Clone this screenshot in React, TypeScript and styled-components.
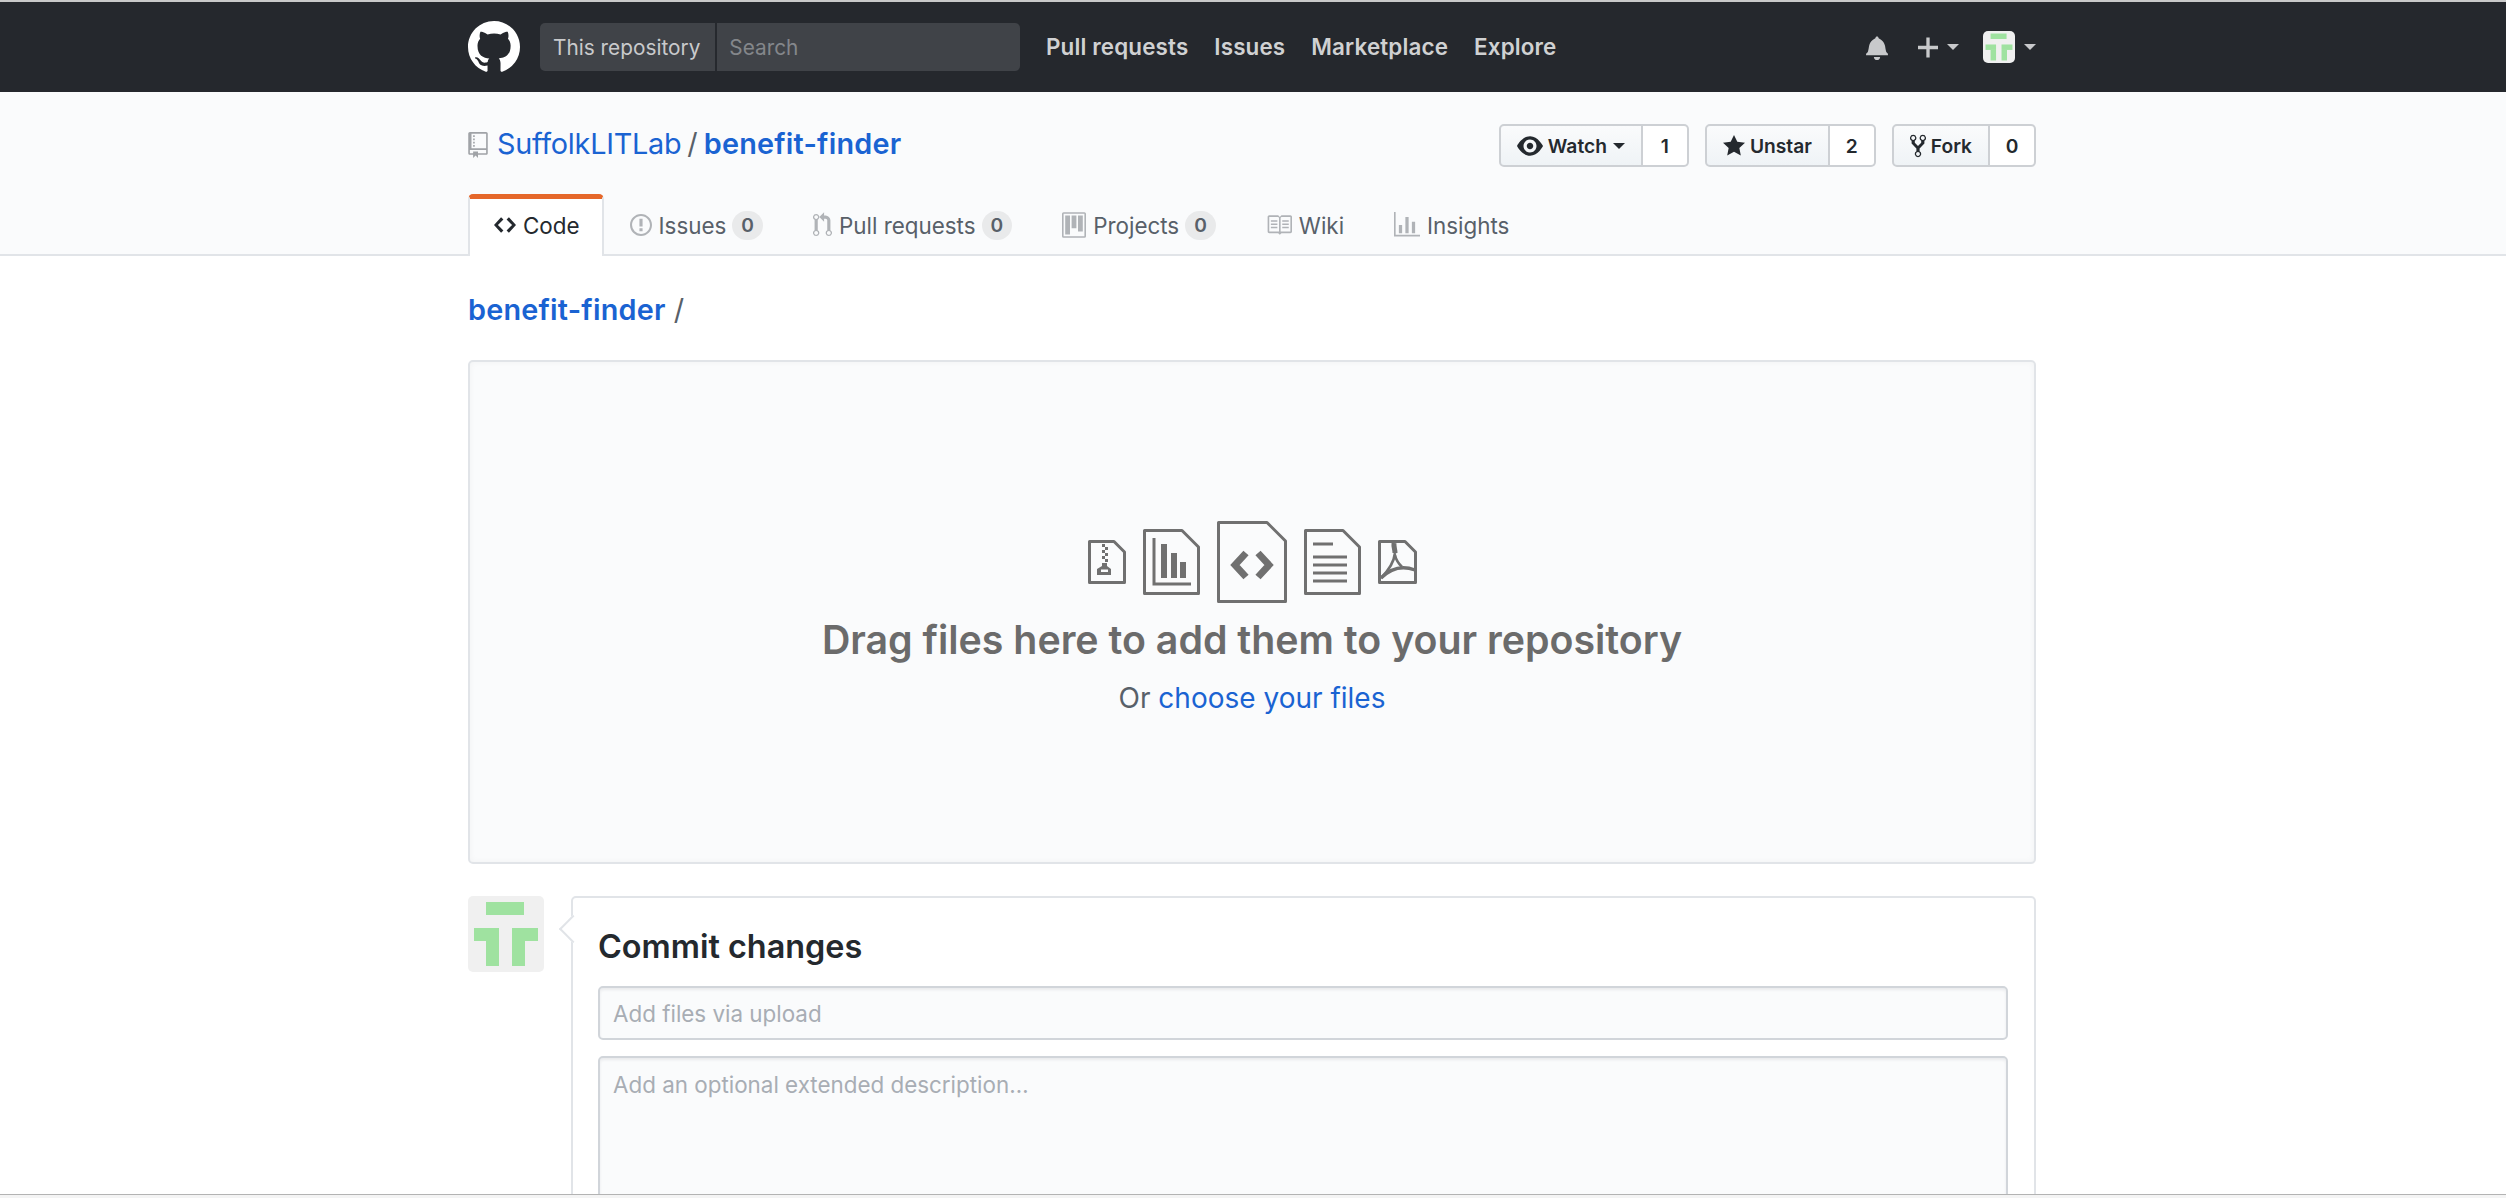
import React from "react"
import styled, { createGlobalStyle } from "styled-components"

const Global = createGlobalStyle`
  html, body { margin: 0; padding: 0; background: #fff; }
  body { font-family: Inter, "Liberation Sans", sans-serif; color: #24292e; }
  * { box-sizing: border-box; }
`

const BLUE = "#1a63d2"
const WRAP = 1568
const LEFT = 468
const FILE_GREY = "#707070"

const Octicon: React.FC<{ w: number; h: number; vw: number; d: string; color: string }> = ({ w, h, vw, d, color }) => (
  <svg width={w} height={h} viewBox={`0 0 ${vw} 16`} fill={color} style={{ flex: "none" }}>
    <path fillRule="evenodd" d={d} />
  </svg>
)

const icons = {
  github:
    "M8 0C3.58 0 0 3.58 0 8c0 3.54 2.29 6.53 5.47 7.59.4.07.55-.17.55-.38 0-.19-.01-.82-.01-1.49-2.01.37-2.53-.49-2.69-.94-.09-.23-.48-.94-.82-1.13-.28-.15-.68-.52-.01-.53.63-.01 1.08.58 1.23.82.72 1.21 1.87.87 2.33.66.07-.52.28-.87.51-1.07-1.78-.2-3.64-.89-3.64-3.95 0-.87.31-1.59.82-2.15-.08-.2-.36-1.02.08-2.12 0 0 .67-.21 2.2.82.64-.18 1.32-.27 2-.27.68 0 1.36.09 2 .27 1.53-1.04 2.2-.82 2.2-.82.44 1.1.16 1.92.08 2.12.51.56.82 1.27.82 2.15 0 3.07-1.87 3.75-3.65 3.95.29.25.54.73.54 1.48 0 1.07-.01 1.93-.01 2.2 0 .21.15.46.55.38A8.013 8.013 0 0 0 16 8c0-4.42-3.58-8-8-8z",
  bell: "M14 12v1H0v-1l.73-.58c.77-.77.81-2.55 1.19-4.42C2.69 3.23 6 2 6 2c0-.55.45-1 1-1s1 .45 1 1c0 0 3.39 1.23 4.16 5 .38 1.88.42 3.66 1.19 4.42l.66.58H14zm-7 4c1.11 0 2-.89 2-2H5c0 1.11.89 2 2 2z",
  plus: "M12 9H7v5H5V9H0V7h5V2h2v5h5v2z",
  eye: "M8.06 2C3 2 0 8 0 8s3 6 8.06 6C13 14 16 8 16 8s-3-6-7.94-6zM8 12c-2.2 0-4-1.78-4-4 0-2.2 1.8-4 4-4 2.22 0 4 1.8 4 4 0 2.22-1.78 4-4 4zm2-4c0 1.11-.89 2-2 2-1.11 0-2-.89-2-2 0-1.11.89-2 2-2 1.11 0 2 .89 2 2z",
  star: "M14 6l-4.9-.64L7 1 4.9 5.36 0 6l3.6 3.26L2.67 14 7 11.67 11.33 14l-.93-4.74L14 6z",
  fork: "M8 1a1.993 1.993 0 0 0-1 3.72V6L5 8 3 6V4.72A1.993 1.993 0 0 0 2 1a1.993 1.993 0 0 0-1 3.72V6.5l3 3v1.78A1.993 1.993 0 0 0 5 15a1.993 1.993 0 0 0 1-3.72V9.5l3-3V4.72A1.993 1.993 0 0 0 8 1zM2 4.2C1.34 4.2.8 3.65.8 3c0-.65.55-1.2 1.2-1.2.65 0 1.2.55 1.2 1.2 0 .65-.55 1.2-1.2 1.2zm3 10c-.66 0-1.2-.55-1.2-1.2 0-.65.55-1.2 1.2-1.2.65 0 1.2.55 1.2 1.2 0 .65-.55 1.2-1.2 1.2zm3-10c-.66 0-1.2-.55-1.2-1.2 0-.65.55-1.2 1.2-1.2.65 0 1.2.55 1.2 1.2 0 .65-.55 1.2-1.2 1.2z",
  repo: "M4 9H3V8h1v1zm0-3H3v1h1V6zm0-2H3v1h1V4zm0-2H3v1h1V2zm8-1v12c0 .55-.45 1-1 1H6v2l-1.5-1.5L3 16v-2H1c-.55 0-1-.45-1-1V1c0-.55.45-1 1-1h10c.55 0 1 .45 1 1zm-1 10H1v2h2v-1h3v1h5v-2zm0-10H2v9h9V1z",
  code: "M9.5 3L8 4.5 11.5 8 8 11.5 9.5 13 14 8 9.5 3zm-5 0L0 8l4.5 5L6 11.5 2.5 8 6 4.5 4.5 3z",
  issue:
    "M7 2.3c3.14 0 5.7 2.56 5.7 5.7s-2.56 5.7-5.7 5.7A5.71 5.71 0 0 1 1.3 8c0-3.14 2.56-5.7 5.7-5.7zM7 1C3.14 1 0 4.14 0 8s3.14 7 7 7 7-3.14 7-7-3.14-7-7-7zm1 3H6v5h2V4zm0 6H6v2h2v-2z",
  pull: "M11 11.28V5c-.03-.78-.34-1.47-.94-2.06C9.46 2.35 8.78 2.03 8 2H7V0L4 3l3 3V4h1c.27.02.48.11.69.31.21.2.3.42.31.69v6.28A1.993 1.993 0 0 0 10 15a1.993 1.993 0 0 0 1-3.72zm-1 2.92c-.66 0-1.2-.55-1.2-1.2 0-.65.55-1.2 1.2-1.2.65 0 1.2.55 1.2 1.2 0 .65-.55 1.2-1.2 1.2zM4 3c0-1.11-.89-2-2-2a1.993 1.993 0 0 0-1 3.72v6.56A1.993 1.993 0 0 0 2 15a1.993 1.993 0 0 0 1-3.72V4.72c.59-.34 1-.98 1-1.72zm-.8 10c0 .66-.55 1.2-1.2 1.2-.65 0-1.2-.55-1.2-1.2 0-.65.55-1.2 1.2-1.2.65 0 1.2.55 1.2 1.2zM2 4.2C1.34 4.2.8 3.65.8 3c0-.65.55-1.2 1.2-1.2.65 0 1.2.55 1.2 1.2 0 .65-.55 1.2-1.2 1.2z",
  project:
    "M10 12h3V2h-3v10zm-4-2h3V2H6v8zm-4 4h3V2H2v12zm-1 1h13V1H1v14zM14 0H1a1 1 0 0 0-1 1v14a1 1 0 0 0 1 1h13a1 1 0 0 0 1-1V1a1 1 0 0 0-1-1z",
  book: "M3 5h4v1H3V5zm0 3h4V7H3v1zm0 2h4V9H3v1zm11-5h-4v1h4V5zm0 2h-4v1h4V7zm0 2h-4v1h4V9zm2-6v9c0 .55-.45 1-1 1H9.5l-1 1-1-1H2c-.55 0-1-.45-1-1V3c0-.55.45-1 1-1h5.5l1 1 1-1H15c.55 0 1 .45 1 1zm-8 .5L7.5 3H2v9h6V3.5zm7-.5H9.5l-.5.5V12h6V3z",
  graph: "M16 14v1H0V0h1v14h15zM5 13H3V8h2v5zm4 0H7V3h2v10zm4 0h-2V6h2v7z",
}

const Identicon: React.FC<{ size: number }> = ({ size }) => (
  <svg width={size} height={size} viewBox="0 0 76 76" style={{ display: "block", flex: "none" }}>
    <rect width="76" height="76" rx="5" fill="#f0f0f0" />
    <g fill="#9fe2a0">
      <rect x="18" y="6" width="38" height="13" />
      <rect x="6" y="32" width="25" height="13" />
      <rect x="44" y="32" width="26" height="13" />
      <rect x="18" y="45" width="13" height="25" />
      <rect x="44" y="45" width="13" height="25" />
    </g>
  </svg>
)

const FileIcon: React.FC<{ w: number; h: number; fold: number; children: React.ReactNode }> = ({
  w,
  h,
  fold,
  children,
}) => (
  <svg width={w} height={h} viewBox={`0 0 ${w} ${h}`} style={{ display: "block", flex: "none" }}>
    <path
      d={`M1.5 1.5H${w - fold}L${w - 1.5} ${fold}V${h - 1.5}H1.5Z`}
      fill="none"
      stroke={FILE_GREY}
      strokeWidth="3"
      strokeLinejoin="round"
    />
    {children}
  </svg>
)

const App: React.FC = () => (
  <S.Page>
    <Global />
    <S.Header>
      <S.HeaderInner>
        <Octicon w={52} h={52} vw={16} d={icons.github} color="#fff" />
        <S.SearchBox>
          <S.Scope>This repository</S.Scope>
          <S.SearchText>Search</S.SearchText>
        </S.SearchBox>
        <S.Nav>
          <S.NavLink>Pull requests</S.NavLink>
          <S.NavLink>Issues</S.NavLink>
          <S.NavLink>Marketplace</S.NavLink>
          <S.NavLink>Explore</S.NavLink>
        </S.Nav>
        <S.UserNav>
          <Octicon w={22} h={25} vw={14} d={icons.bell} color="#c8c9cb" />
          <S.PlusMenu>
            <Octicon w={20} h={27} vw={12} d={icons.plus} color="#c8c9cb" />
            <S.Caret />
          </S.PlusMenu>
          <S.AvatarMenu>
            <S.HeaderAvatar>
              <Identicon size={32} />
            </S.HeaderAvatar>
            <S.Caret />
          </S.AvatarMenu>
        </S.UserNav>
      </S.HeaderInner>
    </S.Header>

    <S.RepoHead>
      <S.RepoInner>
        <S.TitleRow>
          <S.RepoTitle>
            <Octicon w={20} h={26} vw={12} d={icons.repo} color="#a0a3a7" />
            <S.Owner>SuffolkLITLab</S.Owner>
            <S.Slash>/</S.Slash>
            <S.RepoName>benefit-finder</S.RepoName>
          </S.RepoTitle>
          <S.Actions>
            <S.ActionGroup>
              <S.ActionButton>
                <Octicon w={26} h={26} vw={16} d={icons.eye} color="#24292e" />
                Watch
                <S.ButtonCaret />
              </S.ActionButton>
              <S.ActionCount>1</S.ActionCount>
            </S.ActionGroup>
            <S.ActionGroup>
              <S.ActionButton>
                <Octicon w={22} h={26} vw={14} d={icons.star} color="#24292e" />
                Unstar
              </S.ActionButton>
              <S.ActionCount>2</S.ActionCount>
            </S.ActionGroup>
            <S.ActionGroup>
              <S.ActionButton>
                <Octicon w={16} h={26} vw={10} d={icons.fork} color="#24292e" />
                Fork
              </S.ActionButton>
              <S.ActionCount>0</S.ActionCount>
            </S.ActionGroup>
          </S.Actions>
        </S.TitleRow>
        <S.Tabs>
          <S.Tab $active>
            <Octicon w={22} h={26} vw={14} d={icons.code} color="#24292e" />
            Code
          </S.Tab>
          <S.Tab>
            <Octicon w={22} h={26} vw={14} d={icons.issue} color="#b0b3b7" />
            Issues
            <S.Counter>0</S.Counter>
          </S.Tab>
          <S.Tab>
            <Octicon w={19} h={26} vw={12} d={icons.pull} color="#b0b3b7" />
            Pull requests
            <S.Counter>0</S.Counter>
          </S.Tab>
          <S.Tab>
            <Octicon w={24} h={26} vw={15} d={icons.project} color="#b0b3b7" />
            Projects
            <S.Counter>0</S.Counter>
          </S.Tab>
          <S.Tab>
            <Octicon w={26} h={26} vw={16} d={icons.book} color="#b0b3b7" />
            Wiki
          </S.Tab>
          <S.Tab>
            <Octicon w={26} h={26} vw={16} d={icons.graph} color="#b0b3b7" />
            Insights
          </S.Tab>
        </S.Tabs>
      </S.RepoInner>
    </S.RepoHead>

    <S.Main>
      <S.Crumb>
        <S.CrumbLink>benefit-finder</S.CrumbLink>
        <S.CrumbSlash>/</S.CrumbSlash>
      </S.Crumb>

      <S.DropZone>
        <S.FileIcons>
          <FileIcon w={38} h={44} fold={12}>
            <g fill={FILE_GREY}>
              <rect x="14" y="4" width="3" height="3" />
              <rect x="17" y="7" width="3" height="3" />
              <rect x="14" y="10" width="3" height="3" />
              <rect x="17" y="13" width="3" height="3" />
              <rect x="14" y="16" width="3" height="3" />
              <rect x="17" y="19" width="3" height="3" />
              <path fillRule="evenodd" d="M14 23h5v3l4 3v6H9v-6l5-3zM13 29.5v2.5h7v-2.5z" />
            </g>
          </FileIcon>
          <FileIcon w={57} h={66} fold={18}>
            <path d="M11 9V55H48" fill="none" stroke={FILE_GREY} strokeWidth="3" />
            <g fill={FILE_GREY}>
              <rect x="18" y="15" width="6" height="34" />
              <rect x="28" y="24" width="6" height="25" />
              <rect x="37" y="33" width="6" height="16" />
            </g>
          </FileIcon>
          <FileIcon w={70} h={82} fold={20}>
            <path d="M29 32L18 44L29 56M41 32L52 44L41 56" fill="none" stroke={FILE_GREY} strokeWidth="7" />
          </FileIcon>
          <FileIcon w={57} h={66} fold={18}>
            <path d="M9 15H29M9 28H43M9 36H43M9 44H43M9 52H43" fill="none" stroke={FILE_GREY} strokeWidth="3" />
          </FileIcon>
          <FileIcon w={39} h={44} fold={12}>
            <g fill="none" stroke={FILE_GREY}>
              <path d="M16 3C15.5 7 17 9 17 13" strokeWidth="5" />
              <path d="M17 13C16 22 10 31 3 38" strokeWidth="2.6" />
              <path d="M17 15C18 20 21 24 24 27" strokeWidth="2.6" />
              <path d="M3 38C12 29 24 25 37 30" strokeWidth="3.4" />
            </g>
          </FileIcon>
        </S.FileIcons>
        <S.DropTitle>Drag files here to add them to your repository</S.DropTitle>
        <S.DropHint>
          Or <S.ChooseLink>choose your files</S.ChooseLink>
        </S.DropHint>
      </S.DropZone>

      <S.CommitRow>
        <Identicon size={76} />
        <S.CommitBox>
          <S.CommitTitle>Commit changes</S.CommitTitle>
          <S.CommitInput placeholder="Add files via upload" readOnly />
          <S.CommitArea placeholder="Add an optional extended description…" readOnly />
        </S.CommitBox>
      </S.CommitRow>
    </S.Main>
    <S.BottomEdge />
  </S.Page>
)

export default App

const S = {
  Page: styled.div`
    display: flex;
    flex-direction: column;
    height: 100vh;
    overflow: hidden;
    border-top: 2px solid #c9c9c9;
  `,
  Header: styled.header`
    flex: none;
    height: 90px;
    background: #25282d;
  `,
  HeaderInner: styled.div`
    display: flex;
    align-items: center;
    width: ${WRAP}px;
    height: 100%;
    margin-left: ${LEFT}px;
  `,
  SearchBox: styled.div`
    display: flex;
    align-items: stretch;
    width: 480px;
    height: 48px;
    margin-left: 20px;
    background: #404348;
    border-radius: 5px;
    font-size: 20.8px;
    overflow: hidden;
  `,
  Scope: styled.div`
    display: flex;
    align-items: center;
    padding: 0 15px 0 13px;
    color: #c9cacc;
    border-right: 2px solid #26292e;
  `,
  SearchText: styled.div`
    display: flex;
    align-items: center;
    padding-left: 12px;
    color: #84878b;
  `,
  Nav: styled.nav`
    display: flex;
    gap: 26px;
    margin-left: 26px;
    padding-bottom: 2px;
  `,
  NavLink: styled.a`
    color: #d0d1d2;
    font-size: 22.4px;
    font-weight: 600;
    letter-spacing: 0.15px;
  `,
  UserNav: styled.div`
    display: flex;
    align-items: center;
    margin-left: auto;
  `,
  PlusMenu: styled.div`
    display: flex;
    align-items: center;
    gap: 9px;
    margin-left: 30px;
  `,
  AvatarMenu: styled.div`
    display: flex;
    align-items: center;
    gap: 9px;
    margin-left: 24px;
  `,
  HeaderAvatar: styled.div`
    width: 32px;
    height: 32px;
    border-radius: 5px;
    overflow: hidden;
  `,
  Caret: styled.span`
    width: 0;
    height: 0;
    border-style: solid;
    border-width: 6px 6px 0;
    border-color: #c8c9cb transparent transparent;
  `,
  RepoHead: styled.div`
    flex: none;
    height: 164px;
    background: #fafbfc;
    border-bottom: 2px solid #e1e4e8;
  `,
  RepoInner: styled.div`
    display: flex;
    flex-direction: column;
    width: ${WRAP}px;
    height: 100%;
    margin-left: ${LEFT}px;
  `,
  TitleRow: styled.div`
    flex: none;
    display: flex;
    align-items: flex-start;
    justify-content: space-between;
    height: 102px;
    padding-top: 32px;
  `,
  RepoTitle: styled.h1`
    display: flex;
    align-items: center;
    margin: -1px 0 0;
    height: 43px;
    font-size: 28.8px;
    font-weight: 400;
    line-height: 1;
  `,
  Owner: styled.a`
    margin-left: 9px;
    color: ${BLUE};
    letter-spacing: -0.25px;
  `,
  Slash: styled.span`
    margin: 0 6px;
    color: #586069;
  `,
  RepoName: styled.a`
    color: ${BLUE};
    font-weight: 600;
    letter-spacing: 0.22px;
  `,
  Actions: styled.div`
    display: flex;
    gap: 16px;
  `,
  ActionGroup: styled.div`
    display: flex;
    height: 43px;
    font-size: 19.2px;
    font-weight: 600;
  `,
  ActionButton: styled.div`
    display: flex;
    align-items: center;
    gap: 5px;
    padding: 0 16px;
    color: #24292e;
    background: linear-gradient(#fafbfc, #eff3f6);
    border: 2px solid #cdd0d4;
    border-radius: 5px 0 0 5px;
  `,
  ButtonCaret: styled.span`
    width: 0;
    height: 0;
    margin-left: 1px;
    border-style: solid;
    border-width: 6px 6px 0;
    border-color: #24292e transparent transparent;
  `,
  ActionCount: styled.div`
    display: flex;
    align-items: center;
    justify-content: center;
    width: 46px;
    background: #fff;
    border: 2px solid #cdd0d4;
    border-left: 0;
    border-radius: 0 5px 5px 0;
  `,
  Tabs: styled.div`
    flex: none;
    display: flex;
    height: 62px;
  `,
  Tab: styled.a<{ $active?: boolean }>`
    display: flex;
    align-items: center;
    gap: 7px;
    height: 62px;
    padding: ${({ $active }) => ($active ? "0 22px 5px 24px" : "0 22px 0 24px")};
    font-size: 22.4px;
    color: ${({ $active }) => ($active ? "#24292e" : "#586069")};
    background: ${({ $active }) => ($active ? "#fff" : "transparent")};
    border-style: solid;
    border-width: ${({ $active }) => ($active ? "5px 2px 0" : "0 2px")};
    border-color: ${({ $active }) => ($active ? "#e5672a #e1e4e8 transparent" : "transparent")};
    border-radius: 5px 5px 0 0;
    z-index: 1;
  `,
  Counter: styled.span`
    display: inline-block;
    margin-left: -1px;
    padding: 0 9px;
    font-size: 19.2px;
    font-weight: 600;
    line-height: 29px;
    color: #586069;
    background: #e9eaeb;
    border-radius: 16px;
  `,
  Main: styled.main`
    flex: 1;
    min-height: 0;
    width: ${WRAP}px;
    margin-left: ${LEFT}px;
  `,
  Crumb: styled.div`
    display: flex;
    align-items: center;
    height: 104px;
    padding-top: 2px;
    font-size: 28.8px;
  `,
  CrumbLink: styled.a`
    color: ${BLUE};
    font-weight: 600;
    letter-spacing: 0.22px;
  `,
  CrumbSlash: styled.span`
    margin-left: 8px;
    color: #586069;
  `,
  DropZone: styled.section`
    display: flex;
    flex-direction: column;
    align-items: center;
    height: 504px;
    padding-top: 159px;
    background: #fafbfc;
    border: 2px solid #e1e4e8;
    border-radius: 5px;
    box-shadow: inset 0 0 6px rgba(27, 31, 35, 0.04);
  `,
  FileIcons: styled.div`
    display: flex;
    align-items: center;
    gap: 17px;
  `,
  DropTitle: styled.h2`
    margin: 13px 0 0;
    font-size: 39.3px;
    font-weight: 600;
    line-height: 48px;
    color: #6b6b6b;
  `,
  DropHint: styled.p`
    margin: 14px 0 0;
    font-size: 28px;
    line-height: 40px;
    color: #586069;
  `,
  ChooseLink: styled.a`
    color: ${BLUE};
  `,
  CommitRow: styled.div`
    display: flex;
    gap: 27px;
    margin-top: 32px;
  `,
  CommitBox: styled.div`
    position: relative;
    flex: 1;
    height: 420px;
    padding: 29px 26px 0 25px;
    background: #fff;
    border: 2px solid #e1e4e8;
    border-radius: 5px;
    &::before {
      content: "";
      position: absolute;
      top: 21px;
      left: -10px;
      width: 18px;
      height: 18px;
      background: #fff;
      border-left: 2px solid #e1e4e8;
      border-bottom: 2px solid #e1e4e8;
      transform: rotate(45deg);
    }
  `,
  CommitTitle: styled.h3`
    margin: 0 0 19px;
    font-size: 32.4px;
    font-weight: 600;
    line-height: 40px;
    color: #24292e;
  `,
  CommitInput: styled.input`
    display: block;
    width: 100%;
    height: 54px;
    padding: 0 13px;
    font: 22.4px Inter, "Liberation Sans", sans-serif;
    background: #fafbfc;
    border: 2px solid #d1d5da;
    border-radius: 5px;
    box-shadow: inset 0 2px 3px rgba(27, 31, 35, 0.075);
    outline: none;
    &::placeholder {
      color: #a8adb4;
      opacity: 1;
    }
  `,
  CommitArea: styled.textarea`
    display: block;
    width: 100%;
    height: 320px;
    margin-top: 16px;
    padding: 13px;
    font: 22.4px Inter, "Liberation Sans", sans-serif;
    background: #fafbfc;
    border: 2px solid #d1d5da;
    border-radius: 5px;
    box-shadow: inset 0 2px 3px rgba(27, 31, 35, 0.075);
    outline: none;
    resize: none;
    &::placeholder {
      color: #a8adb4;
      opacity: 1;
    }
  `,
  BottomEdge: styled.div`
    flex: none;
    height: 4px;
    background: #f4f4f4;
    border-top: 1px solid #b3b3b3;
    z-index: 2;
  `,
}
